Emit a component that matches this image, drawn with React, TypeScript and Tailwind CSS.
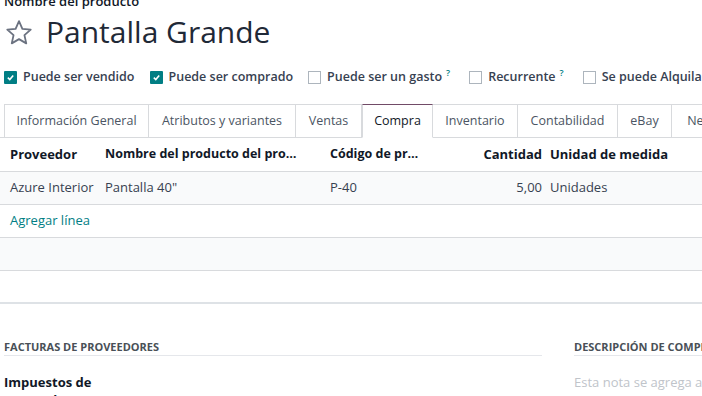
import React from "react";

const tabs = [
  { label: "Información General", w: "w-[145px]" },
  { label: "Atributos y variantes", w: "w-[147px]" },
  { label: "Ventas", w: "w-[66px]" },
  { label: "Compra", w: "w-[71px]", active: true },
  { label: "Inventario", w: "w-[85px]" },
  { label: "Contabilidad", w: "w-[100px]" },
  { label: "eBay", w: "w-[54px]" },
  { label: "Nexus", w: "w-[68px]" },
];

const checks = [
  { label: "Puede ser vendido", on: true },
  { label: "Puede ser comprado", on: true },
  { label: "Puede ser un gasto", help: true },
  { label: "Recurrente", help: true },
  { label: "Se puede Alquilar" },
];

function Check({ on }: { on?: boolean }) {
  return on ? (
    <span className="w-[13px] h-[13px] shrink-0 rounded-[1px] bg-[#017e84] flex items-center justify-center">
      <svg width="9" height="9" viewBox="0 0 10 10" fill="none">
        <path d="M2 5.2 L4.2 7.2 L8 2.8" stroke="white" strokeWidth="1.8" />
      </svg>
    </span>
  ) : (
    <span className="w-[13px] h-[13px] shrink-0 border border-[#adb5bd] bg-white" />
  );
}

export default function App() {
  return (
    <div className="w-[702px] h-[396px] overflow-hidden bg-white text-[#374151] font-['Open_Sans',sans-serif]">
      {/* title block */}
      <div className="pl-1 -mt-[6px]">
        <div className="text-[13px] font-semibold text-[#111827] leading-[15px]">Nombre del producto</div>
        <div className="flex items-center gap-[12px] mt-[5px] h-[36px]">
          <svg width="30" height="29" viewBox="0 0 24 24" fill="none" className="shrink-0">
            <path
              d="M12 2.6 L14.8 9 L21.7 9.6 L16.5 14.2 L18 21 L12 17.5 L6 21 L7.5 14.2 L2.3 9.6 L9.2 9 Z"
              stroke="#6b7280"
              strokeWidth="1.5"
              strokeLinejoin="round"
            />
          </svg>
          <span className="text-[30px] leading-none text-[#1f2937]">Pantalla Grande</span>
        </div>
      </div>

      {/* checkboxes */}
      <div className="flex items-center gap-[15px] pl-1 mt-[19px] h-[16px] whitespace-nowrap">
        {checks.map((c) => (
          <div key={c.label} className="flex items-center gap-[6px]">
            <Check on={c.on} />
            <span className="text-[12.5px] font-semibold text-[#374151]">
              {c.label}
              {c.help && <sup className="text-[#017e84] text-[9px] ml-[4px] mr-[4px] font-semibold">?</sup>}
            </span>
          </div>
        ))}
      </div>

      {/* tabs */}
      <div className="flex mt-[19px] pl-1 h-[34px] border-b border-[#d8dadd] whitespace-nowrap">
        {tabs.map((t) => (
          <div
            key={t.label}
            className={
              t.active
                ? `${t.w} shrink-0 -mb-px bg-white border border-[#d8dadd] border-t-[#714b67] border-b-white flex items-center justify-center text-[12.5px] text-[#111827]`
                : `${t.w} shrink-0 border-t border-r border-[#d8dadd] first:border-l flex items-center justify-center text-[12.5px] text-[#4b5563]`
            }
          >
            {t.label}
          </div>
        ))}
      </div>

      {/* table */}
      <div className="text-[13px]">
        <div className="flex items-center h-[34px] border-b border-[#d8dadd] font-bold text-[#111827] whitespace-nowrap">
          <div className="w-[105px] pl-[10px]">Proveedor</div>
          <div className="w-[215px] text-[12.5px]">Nombre del producto del pro…</div>
          <div className="w-[120px] pl-[10px] text-[12.5px]">Código de pr…</div>
          <div className="w-[102px] text-right">Cantidad</div>
          <div className="pl-[8px]">Unidad de medida</div>
        </div>
        <div className="flex items-center h-[33px] border-b border-[#d8dadd] bg-[#f9fafb]">
          <div className="w-[105px] pl-[10px]">Azure Interior</div>
          <div className="w-[215px]">Pantalla 40"</div>
          <div className="w-[120px] pl-[10px]">P-40</div>
          <div className="w-[102px] text-right">5,00</div>
          <div className="pl-[8px]">Unidades</div>
        </div>
        <div className="flex items-center h-[33px] border-b border-[#d8dadd] pl-[10px] text-[#017e84]">
          Agregar línea
        </div>
        <div className="h-[33px] border-b border-[#d8dadd] bg-[#f9fafb]" />
        <div className="h-[33px] border-b-2 border-[#dee2e6]" />
      </div>

      {/* bottom sections */}
      <div className="flex mt-[36px]">
        <div className="w-[538px] ml-1">
          <div className="text-[11px] font-bold uppercase text-[#495057] leading-[14px] pb-[1px] border-b border-[#e5e7eb]">
            Facturas de proveedores
          </div>
          <div className="mt-[17px] text-[13px] font-bold text-[#111827] leading-[18px]">
            Impuestos de
            <br />
            proveedor
          </div>
        </div>
        <div className="ml-[32px] flex-1 whitespace-nowrap overflow-hidden">
          <div className="text-[11px] font-bold uppercase text-[#495057] leading-[14px] pb-[1px] border-b border-[#e5e7eb]">
            Descripción de compra
          </div>
          <div className="mt-[17px] text-[13px] text-[#c0c4ca]">Esta nota se agrega a las órdenes de compra.</div>
        </div>
      </div>
    </div>
  );
}
